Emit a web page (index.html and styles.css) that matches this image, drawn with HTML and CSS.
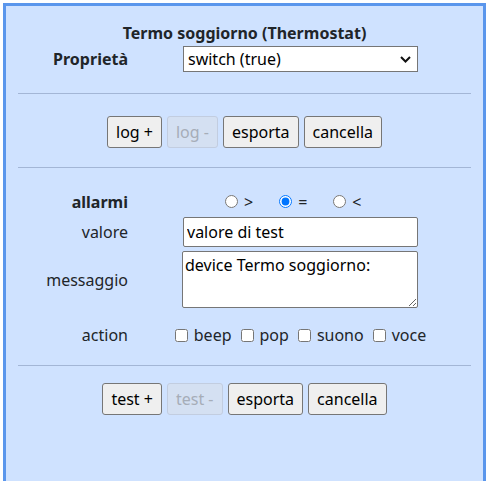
FILE: index.html
```html
<!DOCTYPE html>
<html lang="it">
<head>
<meta charset="utf-8">
<title>Termo soggiorno</title>
<link rel="stylesheet" href="styles.css">
</head>
<body>
<div class="panel">
  <div class="title">Termo soggiorno (Thermostat)</div>
  <div class="form-grid prop-row">
    <label class="lbl strong" for="prop">Proprietà</label>
    <div class="select-wrap">
      <select id="prop" class="select"><option>switch (true)</option></select>
      <svg class="chev" width="11" height="7" viewBox="0 0 11 7"><path d="M1 1l4.5 4.5L10 1" fill="none" stroke="#111" stroke-width="2"/></svg>
    </div>
  </div>
  <hr class="sep">
  <div class="btns">
    <button class="btn">log +</button>
    <button class="btn" disabled>log -</button>
    <button class="btn">esporta</button>
    <button class="btn">cancella</button>
  </div>
  <hr class="sep sep-b">
  <div class="form-grid alarms">
    <span class="lbl strong">allarmi</span>
    <div class="radios">
      <label class="opt"><input type="radio" name="cmp"> &gt;</label>
      <label class="opt"><input type="radio" name="cmp" checked> =</label>
      <label class="opt"><input type="radio" name="cmp"> &lt;</label>
    </div>
    <label class="lbl" for="val">valore</label>
    <input id="val" class="text" type="text" value="valore di test">
    <label class="lbl" for="msg">messaggio</label>
    <textarea id="msg" class="area">device Termo soggiorno:</textarea>
    <span class="lbl spaced">action</span>
    <div class="checks spaced">
      <label class="chk"><input type="checkbox"> beep</label>
      <label class="chk"><input type="checkbox"> pop</label>
      <label class="chk"><input type="checkbox"> suono</label>
      <label class="chk"><input type="checkbox"> voce</label>
    </div>
  </div>
  <hr class="sep sep-c">
  <div class="btns btns-b">
    <button class="btn">test +</button>
    <button class="btn" disabled>test -</button>
    <button class="btn">esporta</button>
    <button class="btn">cancella</button>
  </div>
</div>
</body>
</html>
```

FILE: styles.css
```css
html, body {
  margin: 0;
  padding: 0;
  background: #fff;
  overflow: hidden;
}
body {
  padding: 3px 0 0 3px;
  font-family: "Noto Sans", "Open Sans", sans-serif;
  font-size: 16px;
  color: #212529;
}
.panel {
  width: 477px;
  min-height: 500px;
  border: 3px solid #5a96ec;
  border-bottom: none;
  background: #cfe2ff;
  box-sizing: content-box;
  padding-top: 17px;
}
.title {
  text-align: center;
  font-weight: bold;
  line-height: 20px;
}
.form-grid {
  display: grid;
  grid-template-columns: 122px 235px;
  column-gap: 55px;
  align-items: center;
}
.prop-row {
  margin-top: 3px;
}
.lbl {
  text-align: right;
  line-height: 22px;
}
.strong {
  font-weight: bold;
}
.select-wrap {
  display: grid;
}
.select {
  grid-area: 1 / 1;
  appearance: none;
  height: 26px;
  border: 1px solid #767676;
  border-radius: 0;
  background: #fff;
  font: inherit;
  color: #000;
  padding: 0 4px;
}
.chev {
  grid-area: 1 / 1;
  justify-self: end;
  align-self: center;
  margin-right: 7px;
  pointer-events: none;
}
.sep {
  margin: 21px 12px 0 12px;
  border: none;
  border-top: 1px solid #a3b6d6;
  height: 0;
}
.sep-b {
  margin-top: 19px;
}
.sep-c {
  margin-top: 19px;
}
.btns {
  display: flex;
  justify-content: center;
  gap: 5px;
  margin-top: 22px;
}
.btns-b {
  margin-top: 17px;
}
.btn {
  font: inherit;
  color: #000;
  height: 32px;
  padding: 0 8px;
  background: #efefef;
  border: 1px solid #767676;
  border-radius: 3px;
}
.btn:disabled {
  background: #d4e0f2;
  border-color: #c2cde0;
  color: #a6adb8;
}
.alarms {
  margin-top: 22px;
  row-gap: 4px;
}
.radios {
  display: flex;
  align-items: center;
  min-height: 23px;
  gap: 26px;
  padding-left: 42px;
}
.opt, .chk {
  display: inline-flex;
  align-items: center;
  gap: 6px;
  line-height: 22px;
}
.opt input, .chk input {
  margin: 0;
}
.text {
  font: inherit;
  height: 30px;
  box-sizing: border-box;
  border: 1px solid #767676;
  border-radius: 2px;
  padding: 0 3px;
  color: #000;
}
.area {
  font: inherit;
  height: 57px;
  box-sizing: border-box;
  border: 1px solid #767676;
  border-radius: 2px;
  padding: 2px 2px;
  margin-left: -1px;
  color: #000;
  resize: both;
}
.checks {
  display: flex;
  justify-content: center;
  gap: 9px;
  white-space: nowrap;
}
.spaced {
  margin-top: 12px;
}
```
